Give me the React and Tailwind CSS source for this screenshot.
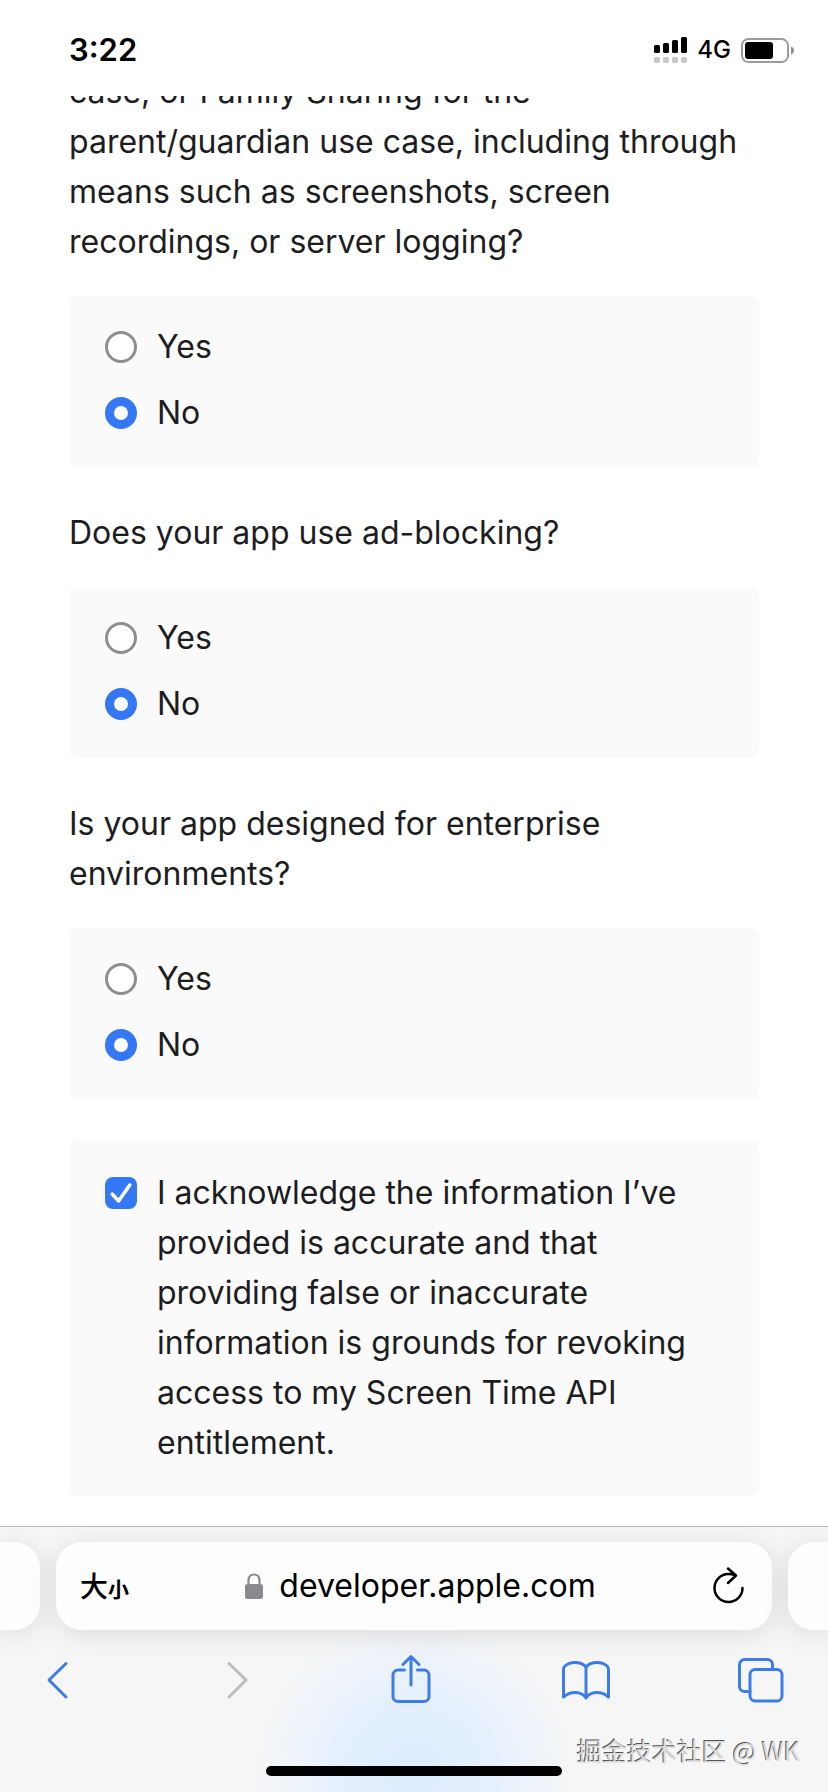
import React from 'react'

const questions = [
    {
        id: 'capture',
        title: 'case, or Family Sharing for the parent/guardian use case, including through means such as screenshots, screen recordings, or server logging?',
    },
    { id: 'adblock', title: 'Does your app use ad-blocking?' },
    { id: 'enterprise', title: 'Is your app designed for enterprise environments?' },
]

const StatusBar = () => {
    return (
        <header className="flex h-24 shrink-0 items-start justify-between bg-white pl-[69px] pr-[34px] pt-[30px] text-black">
            <span className="text-[31px] leading-10 font-semibold">3:22</span>

            <div className="flex h-10 items-center gap-[10px]">
                {/* Dual SIM signal */}
                <svg width="33" height="26" viewBox="0 0 33 26" aria-hidden="true">
                    <rect x="0" y="8" width="6" height="8" rx="1.5" />
                    <rect x="9" y="6" width="6" height="10" rx="1.5" />
                    <rect x="18" y="3" width="6" height="13" rx="1.5" />
                    <rect x="27" y="0" width="6" height="16" rx="1.5" />
                    <g fill="#c8c8c8">
                        <rect x="0" y="20" width="6" height="6" rx="1.5" />
                        <rect x="9" y="20" width="6" height="6" rx="1.5" />
                        <rect x="18" y="20" width="6" height="6" rx="1.5" />
                        <rect x="27" y="20" width="6" height="6" rx="1.5" />
                    </g>
                </svg>
                <span className="text-[24px] leading-10 font-medium">4G</span>
                {/* Battery */}
                <svg width="53" height="25" viewBox="0 0 53 25" aria-hidden="true">
                    <rect x="1" y="1" width="46" height="23" rx="6.5" fill="none" stroke="#9b9b9b" strokeWidth="2" />
                    <rect x="4" y="4" width="28" height="17" rx="3" />
                    <path d="M50 8.5c2 .8 3 2.2 3 4s-1 3.2-3 4z" fill="#8f8f8f" />
                </svg>
            </div>
        </header>
    )
}

const Option = ({ name, label, checked }) => {
    return (
        <label className="flex items-center gap-5">
            <input
                type="radio"
                name={name}
                defaultChecked={checked}
                className="size-8 shrink-0 appearance-none rounded-full border-[3px] border-[#8e8e8e] bg-white checked:border-[9px] checked:border-[#3478f6]"
            />
            {label}
        </label>
    )
}

const Question = ({ id, title }) => {
    return (
        <fieldset className="mb-[41px]">
            <legend className="mb-[29px]">{title}</legend>
            <div className="flex flex-col gap-4 rounded-lg bg-[#fafafa] px-9 pt-[26px] pb-[29px]">
                <Option name={id} label="Yes" />
                <Option name={id} label="No" checked />
            </div>
        </fieldset>
    )
}

const Acknowledge = () => {
    return (
        <label className="flex items-start gap-5 rounded-lg bg-[#fafafa] px-9 py-7">
            <span className="relative mt-[9px] size-8 shrink-0">
                <input
                    type="checkbox"
                    defaultChecked
                    className="block size-8 appearance-none rounded-lg border-[3px] border-[#8e8e8e] bg-white checked:border-0 checked:bg-[#3478f6]"
                />
                <svg className="pointer-events-none absolute inset-0" width="32" height="32" viewBox="0 0 32 32" fill="none" stroke="#fff" strokeWidth="3.5" strokeLinecap="round" strokeLinejoin="round" aria-hidden="true">
                    <path d="M7.2 17 13.6 24 24.8 8" />
                </svg>
            </span>
            <span>
                I acknowledge the information I’ve provided is accurate and that providing false or inaccurate information is grounds for revoking access to my Screen Time API entitlement.
            </span>
        </label>
    )
}

const AddressBar = () => {
    return (
        <div className="flex h-[88px] gap-4">
            {/* Edge of the previous tab */}
            <div className="w-10 rounded-r-[26px] bg-[#fdfdfd] shadow-[0_4px_28px_rgba(0,0,0,0.11)]"></div>

            <div className="flex flex-1 items-center justify-between rounded-[26px] bg-[#fdfdfd] pl-6 pr-[26px] shadow-[0_4px_28px_rgba(0,0,0,0.11)]">
                <button type="button" className="flex items-baseline font-['Noto_Sans_CJK_SC',sans-serif] font-medium leading-10">
                    <span className="text-[28px]">大</span>
                    <span className="text-[21px] font-bold">小</span>
                </button>
                <button type="button" className="flex items-center gap-4 text-[32px] leading-[50px]">
                    <svg width="18" height="26" viewBox="0 0 18 26" aria-hidden="true">
                        <path d="M3.5 12V7.5C3.5 3.8 5.8 1.5 9 1.5s5.5 2.300 5.500 6V12" fill="none" stroke="#8a8a8e" strokeWidth="2.2" />
                        <rect x="0" y="11" width="18" height="15" rx="2.5" fill="#8a8a8e" />
                    </svg>
                    developer.apple.com
                </button>
                <button type="button" aria-label="Reload">
                    <svg width="34" height="38" viewBox="0 0 34 38" fill="none" stroke="#000" strokeWidth="2.5" strokeLinecap="round" strokeLinejoin="round">
                        <path d="M30.5 21a14 14 0 1 1-14-14c2.3 0 4.300.3 6.300 1" />
                        <path d="M16 1.500 24 8.500 16 16" />
                    </svg>
                </button>
            </div>

            {/* Edge of the next tab */}
            <div className="w-10 rounded-l-[26px] bg-[#fdfdfd] shadow-[0_4px_28px_rgba(0,0,0,0.11)]"></div>
        </div>
    )
}

const ToolButton = ({ label, disabled, children }) => {
    return (
        <button
            type="button"
            aria-label={label}
            disabled={disabled}
            className="size-[50px] text-[#3c7ce8] disabled:text-[#bdbdbf]"
        >
            <svg width="50" height="50" viewBox="0 0 50 50" fill="none" stroke="currentColor" strokeWidth="3" strokeLinecap="round" strokeLinejoin="round">
                {children}
            </svg>
        </button>
    )
}

const Toolbar = () => {
    return (
        <nav className="mt-6 flex justify-between pl-[34px] pr-[42px]">
            <ToolButton label="Back">
                <path d="M32 9.500 15 26l17 17" />
            </ToolButton>
            <ToolButton label="Forward" disabled>
                <path d="M19 9.500 36 26 19 43" />
            </ToolButton>
            <ToolButton label="Share">
                <path d="M19.500 16H13a5 5 0 0 0-5 5v21.500a5 5 0 0 0 5 5h26a5 5 0 0 0 5-5V21a5 5 0 0 0-5-5h-6.500" />
                <path d="M26 31V3M18 10.500 26 2.500l8 8" />
            </ToolButton>
            <ToolButton label="Bookmarks">
                <path d="M25 13c-2.500-3-6.500-4.500-11-4.500-4 0-7.500 1.200-10 3.500-1 .9-1.500 1.800-1.500 3v28c3.500-3 7-4.500 11.500-4.500 4.300 0 8 1.500 11 5 3-3.500 6.700-5 11-5 4.500 0 8 1.500 11.500 4.500V15c0-1.200-.5-2.100-1.500-3-2.500-2.300-6-3.500-10-3.500-4.500 0-8.500 1.500-11 4.500z" />
                <path d="M25 13v31" />
            </ToolButton>
            <ToolButton label="Tabs">
                <path d="M14 37.500H8.500a5 5 0 0 1-5-5v-22a5 5 0 0 1 5-5h23a5 5 0 0 1 5 5V15" />
                <rect x="14" y="15.500" width="32" height="31.500" rx="5" />
            </ToolButton>
        </nav>
    )
}

const App = () => {
    return (
        <div className="flex h-screen flex-col overflow-hidden bg-white font-['Inter','Noto_Sans_CJK_SC',sans-serif]">
            <StatusBar />

            {/* Page, scrolled to its end */}
            <main className="flex min-h-0 flex-1 flex-col justify-end overflow-hidden px-[69px] pb-[30px] text-[32px] leading-[50px] text-[#1d1d1f]">
                <form>
                    {questions.map((q) => (
                        <Question key={q.id} id={q.id} title={q.title} />
                    ))}
                    <Acknowledge />
                </form>
            </main>

            {/* Browser controls */}
            <footer className="relative shrink-0 overflow-hidden border-t border-[#b9b9b9] bg-[#f6f6f6] bg-[radial-gradient(ellipse_160px_150px_at_50%_92%,#dcecff,#e4f0ff_45%,#f6f6f6)] pt-[15px] pb-4">
                <AddressBar />
                <Toolbar />
                <div className="mx-auto mt-[62px] h-[10px] w-[296px] rounded-full bg-black"></div>
                <span className="absolute right-7 bottom-6 font-['Noto_Sans_CJK_SC',sans-serif] text-[25px] leading-9 text-[#dcdcdc] [text-shadow:-1px_-1px_0_#555]">
                    掘金技术社区 @ WK
                </span>
            </footer>
        </div>
    )
}

export default App
